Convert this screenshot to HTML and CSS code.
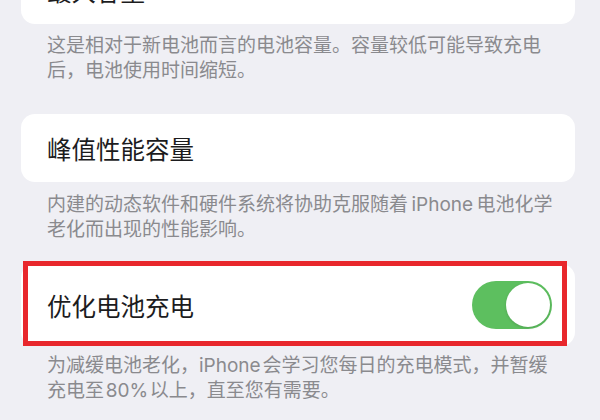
FILE: index.html
```html
<!DOCTYPE html>
<html lang="zh-CN">
<head>
    <meta charset="UTF-8">
    <meta name="viewport" content="width=device-width, initial-scale=1.0">
    <title>电池健康</title>
    <link rel="stylesheet" href="styles.css">
</head>
<body>
    <div class="page">
        <div class="group first">
            <div class="cell">
                <span class="label">最大容量</span>
                <span class="value">100%</span>
            </div>
        </div>
        <p class="footer">这是相对于新电池而言的电池容量。容量较低可能导致充电<br>后，电池使用时间缩短。</p>

        <div class="group peak">
            <div class="cell">
                <span class="label">峰值性能容量</span>
            </div>
        </div>
        <p class="footer">内建的动态软件和硬件系统将协助克服随着&#8201;iPhone&#8201;电池化学<br>老化而出现的性能影响。</p>

        <div class="group charge">
            <div class="cell tall">
                <span class="label">优化电池充电</span>
                <span class="switch on"><span class="knob"></span></span>
            </div>
            <span class="mark"></span>
        </div>
        <p class="footer tight">为减缓电池老化，iPhone&#8202;会学习您每日的充电模式，并暂缓<br>充电至&#8202;80%&#8202;以上，直至您有需要。</p>
    </div>
</body>
</html>
```

FILE: styles.css
```css
* {
    margin: 0;
    padding: 0;
    box-sizing: border-box;
}

html, body {
    height: 420px;
    overflow: hidden;
}

body {
    background: #efeff4;
    font-family: "Inter", "Noto Sans CJK SC", sans-serif;
    color: #1c1c1e;
}

.page {
    padding: 0 25px 0 21px;
}

.group {
    background: #fff;
    border-radius: 14px;
    position: relative;
}

.group.first {
    margin-top: -44px;
}

.group.peak {
    margin-top: 31px;
}

.group.charge {
    margin-top: 22px;
}

.cell {
    height: 68px;
    display: flex;
    align-items: center;
    justify-content: space-between;
    padding: 0 23px 0 26px;
}

.cell.tall {
    height: 82px;
}

.label {
    font-size: 24.5px;
    font-family: "Noto Sans CJK SC", sans-serif;
}

.value {
    font-size: 24px;
    color: #8a8a8e;
    padding-right: 4px;
}

.switch {
    width: 80px;
    height: 48px;
    border-radius: 24px;
    background: #5dbf5f;
    display: flex;
    align-items: center;
    padding: 2px;
}

.switch.on {
    justify-content: flex-end;
}

.switch .knob {
    width: 44px;
    height: 44px;
    border-radius: 50%;
    background: #fff;
    box-shadow: 0 1px 3px rgba(0, 0, 0, 0.15);
}

/* red highlight drawn over the row */
.mark {
    position: absolute;
    top: -3px;
    left: 2px;
    right: 8px;
    bottom: 0;
    border: 5px solid #e8272c;
}

.footer {
    padding: 9px 26px 0;
    font-size: 19px;
    line-height: 25px;
    color: #8a8a8e;
    white-space: nowrap;
}

.group.peak + .footer {
    padding-top: 10px;
}

.footer.tight {
    padding-top: 7px;
}
```
